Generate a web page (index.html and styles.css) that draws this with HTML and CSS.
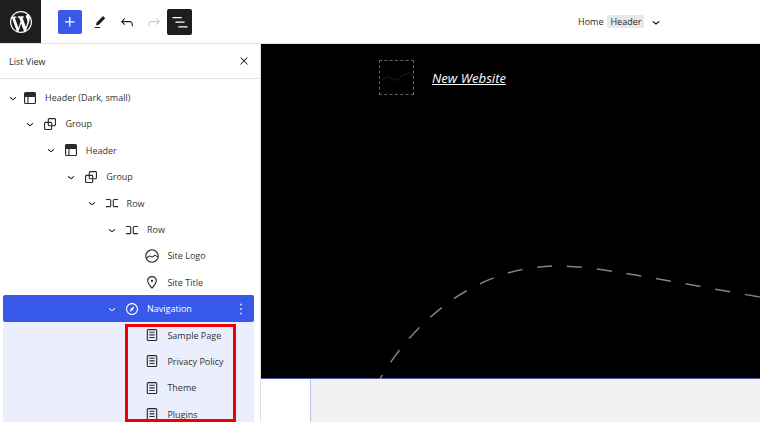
FILE: index.html
```html
<!DOCTYPE html>
<html lang="en">
<head>
  <meta charset="UTF-8">
  <title>List View</title>
  <link rel="stylesheet" href="styles.css">
</head>
<body>

  <!-- icon sprite -->
  <svg class="sprite" xmlns="http://www.w3.org/2000/svg">
    <symbol id="i-wp" viewBox="0 0 20 20"><path d="M20 10c0-5.51-4.49-10-10-10C4.48 0 0 4.49 0 10c0 5.52 4.48 10 10 10 5.51 0 10-4.48 10-10zM7.78 15.37L4.37 6.22c.55-.02 1.17-.08 1.17-.08.5-.06.44-1.13-.06-1.11 0 0-1.45.11-2.37.11-.18 0-.37 0-.58-.01C4.12 2.69 6.87 1.11 10 1.11c2.33 0 4.45.87 6.05 2.34-.68-.11-1.65.39-1.65 1.58 0 .74.45 1.36.9 2.1.35.61.55 1.36.55 2.46 0 1.49-1.4 5-1.4 5l-3.03-8.37c.54-.02.82-.17.82-.17.5-.05.44-1.25-.06-1.22 0 0-1.44.12-2.38.12-.87 0-2.33-.12-2.33-.12-.5-.03-.56 1.2-.06 1.22l.92.08 1.26 3.41zM17.41 10c.24-.64.74-1.87.43-4.25.7 1.29 1.05 2.71 1.05 4.25 0 3.29-1.73 6.24-4.4 7.78.97-2.59 1.94-5.2 2.92-7.78zM6.1 18.09C3.12 16.65 1.11 13.53 1.11 10c0-1.3.23-2.48.72-3.59C3.25 10.3 4.67 14.2 6.1 18.09zm4.03-6.63l2.58 6.98c-.86.29-1.76.45-2.71.45-.79 0-1.57-.11-2.29-.33.81-2.38 1.62-4.74 2.42-7.1z"/></symbol>
    <symbol id="i-plus" viewBox="0 0 24 24"><path d="M11 12.5V17.5H12.5V12.5H17.5V11H12.5V6H11V11H6V12.5H11Z"/></symbol>
    <symbol id="i-pencil" viewBox="0 0 24 24"><path d="m19 7-3-3-8.5 8.5-1 4 4-1L19 7Zm-7 11.5H5V20h7v-1.5Z"/></symbol>
    <symbol id="i-undo" viewBox="0 0 24 24"><path d="M18.3 11.7c-.6-.6-1.4-.9-2.3-.9H6.7l2.9-3.3-1.1-1-4.5 5L8.5 16l1-1-2.7-2.7H16c.5 0 .9.2 1.3.5 1 1 1 3.4 1 4.5v.3h1.5v-.2c0-1.5 0-4.3-1.5-5.7z"/></symbol>
    <symbol id="i-redo" viewBox="0 0 24 24"><path d="M15.6 6.5l-1.1 1 2.9 3.3H8c-.9 0-1.7.3-2.3.9-1.4 1.5-1.4 4.2-1.4 5.6v.2h1.5v-.3c0-1.1 0-3.5 1-4.5.3-.3.7-.5 1.3-.5h9.2L14.5 15l1.1 1.1 4.6-4.6-4.6-5z"/></symbol>
    <symbol id="i-list" viewBox="0 0 24 24"><path d="M3 6h11v1.5H3V6Zm3.5 5.5h11V13h-11v-1.5ZM21 17H10v1.5h11V17Z"/></symbol>
    <symbol id="i-close" viewBox="0 0 24 24"><path d="M13 11.8l6.1-6.3-1-1-6.1 6.2-6.1-6.2-1 1 6.1 6.3-6.5 6.7 1 1 6.5-6.6 6.5 6.6 1-1z"/></symbol>
    <symbol id="i-chevron" viewBox="0 0 24 24"><path d="M17.5 11.6L12 16l-5.5-4.4.9-1.2L12 14l4.5-3.6 1 1.2z"/></symbol>
    <symbol id="i-header" viewBox="0 0 24 24"><path d="M18.5 10.5H10v8h8a.5.5 0 00.5-.5v-7.5zm-10 0h-3V18a.5.5 0 00.5.5h2.5v-8zM6 4h12a2 2 0 012 2v12a2 2 0 01-2 2H6a2 2 0 01-2-2V6a2 2 0 012-2z"/></symbol>
    <symbol id="i-group" viewBox="0 0 24 24"><path d="M18 4h-7c-1.1 0-2 .9-2 2v3H6c-1.1 0-2 .9-2 2v7c0 1.1.9 2 2 2h7c1.1 0 2-.9 2-2v-3h3c1.1 0 2-.9 2-2V6c0-1.1-.9-2-2-2zm-4.5 14c0 .3-.2.5-.5.5H6c-.3 0-.5-.2-.5-.5v-7c0-.3.2-.5.5-.5h3V13c0 1.1.9 2 2 2h2.5v3zm0-4.5H11c-.3 0-.5-.2-.5-.5v-2.5H13c.3 0 .5.2.5.5v2.5zm5-.5c0 .3-.2.5-.5.5h-3V11c0-1.1-.9-2-2-2h-2.5V6c0-.3.2-.5.5-.5h7c.3 0 .5.2.5.5v7z"/></symbol>
    <symbol id="i-row" viewBox="0 0 24 24"><path d="M4 6.5h5a2 2 0 0 1 2 2v7a2 2 0 0 1-2 2H4V16h5a.5.5 0 0 0 .5-.5v-7A.5.5 0 0 0 9 8H4V6.5Zm16 0h-5a2 2 0 0 0-2 2v7a2 2 0 0 0 2 2h5V16h-5a.5.5 0 0 1-.5-.5v-7A.5.5 0 0 1 15 8h5V6.5Z"/></symbol>
    <symbol id="i-logo" viewBox="0 0 24 24"><path d="M12 3c-5 0-9 4-9 9s4 9 9 9 9-4 9-9-4-9-9-9zm0 1.5c4.1 0 7.5 3.4 7.5 7.5v.1c-1.4-.8-3.3-1.7-3.4-1.8-.2-.1-.5-.1-.8.1l-2.9 2.1L9 11.3c-.2-.1-.4 0-.6.1l-3.7 2.2c-.1-.5-.2-1-.2-1.5 0-4.1 3.4-7.5 7.5-7.5zm0 15c-3.1 0-5.7-1.9-6.9-4.5l3.7-2.2 3.5 1.2c.2.1.5 0 .7-.1l2.9-2.1c.8.4 2.5 1.2 3.5 1.9-.9 3.3-3.9 5.8-7.4 5.8z"/></symbol>
    <symbol id="i-marker" viewBox="0 0 24 24"><path d="M12 9c-.8 0-1.5.7-1.5 1.5S11.2 12 12 12s1.5-.7 1.5-1.5S12.8 9 12 9zm0-5c-3.6 0-6.5 2.8-6.5 6.2 0 .8.3 1.8.9 3.1.5 1.1 1.2 2.3 2 3.6.7 1 3 3.8 3.2 3.9l.4.5.4-.5c.2-.2 2.6-2.9 3.2-3.9.8-1.2 1.5-2.5 2-3.6.6-1.3.9-2.3.9-3.1C18.5 6.8 15.6 4 12 4zm4.3 8.7c-.5 1-1.1 2.2-1.9 3.4-.5.7-1.7 2.2-2.4 3-.7-.8-1.9-2.3-2.4-3-.8-1.2-1.4-2.3-1.9-3.3-.6-1.4-.7-2.2-.7-2.5 0-2.6 2.2-4.7 5-4.7s5 2.1 5 4.7c0 .2-.1 1-.7 2.4z"/></symbol>
    <symbol id="i-nav" viewBox="0 0 24 24"><path d="M12 4c-4.4 0-8 3.6-8 8s3.6 8 8 8 8-3.6 8-8-3.6-8-8-8zm0 14.5c-3.6 0-6.5-2.9-6.5-6.5S8.4 5.5 12 5.5s6.5 2.9 6.5 6.5-2.9 6.5-6.5 6.5zM9 16l4.5-3L15 8.4l-4.5 3L9 16z"/></symbol>
    <symbol id="i-page" viewBox="0 0 24 24"><path d="M15.5 7.5h-7V9h7V7.5Zm-7 3.5h7v1.5h-7V11Zm7 3.5h-7V16h7v-1.5Z"/><path d="M17 4H7a2 2 0 0 0-2 2v12a2 2 0 0 0 2 2h10a2 2 0 0 0 2-2V6a2 2 0 0 0-2-2ZM7 5.5h10a.5.5 0 0 1 .5.5v12a.5.5 0 0 1-.5.5H7a.5.5 0 0 1-.5-.5V6a.5.5 0 0 1 .5-.5Z"/></symbol>
    <symbol id="i-more" viewBox="0 0 24 24"><path d="M13 19h-2v-2h2v2zm0-6h-2v-2h2v2zm0-6h-2V5h2v2z"/></symbol>
  </svg>

  <!-- top bar -->
  <header class="topbar">
    <a class="site-btn"><svg class="wp-logo"><use href="#i-wp"/></svg></a>
    <div class="tools">
      <button class="tool add-btn"><svg><use href="#i-plus"/></svg></button>
      <button class="tool plain pencil"><svg><use href="#i-pencil"/></svg></button>
      <button class="tool plain"><svg><use href="#i-undo"/></svg></button>
      <button class="tool plain off"><svg><use href="#i-redo"/></svg></button>
      <button class="tool list-btn"><svg><use href="#i-list"/></svg></button>
    </div>
    <div class="doc-title">
      <span>Home</span>
      <span class="doc-current">Header</span>
      <svg><use href="#i-chevron"/></svg>
    </div>
  </header>

  <div class="main">
    <!-- list view -->
    <aside class="sidebar">
      <div class="side-head">
        <span>List View</span>
        <svg><use href="#i-close"/></svg>
      </div>
      <ul class="tree">
        <li class="row lv0"><svg class="toggle"><use href="#i-chevron"/></svg><svg class="ico"><use href="#i-header"/></svg>Header (Dark, small)</li>
        <li class="row lv1"><svg class="toggle"><use href="#i-chevron"/></svg><svg class="ico"><use href="#i-group"/></svg>Group</li>
        <li class="row lv2"><svg class="toggle"><use href="#i-chevron"/></svg><svg class="ico"><use href="#i-header"/></svg>Header</li>
        <li class="row lv3"><svg class="toggle"><use href="#i-chevron"/></svg><svg class="ico"><use href="#i-group"/></svg>Group</li>
        <li class="row lv4"><svg class="toggle"><use href="#i-chevron"/></svg><svg class="ico"><use href="#i-row"/></svg>Row</li>
        <li class="row lv5"><svg class="toggle"><use href="#i-chevron"/></svg><svg class="ico"><use href="#i-row"/></svg>Row</li>
        <li class="row lv6"><span class="toggle"></span><svg class="ico"><use href="#i-logo"/></svg>Site Logo</li>
        <li class="row lv6"><span class="toggle"></span><svg class="ico"><use href="#i-marker"/></svg>Site Title</li>
        <li class="row lv5 selected"><svg class="toggle"><use href="#i-chevron"/></svg><svg class="ico"><use href="#i-nav"/></svg>Navigation<svg class="more"><use href="#i-more"/></svg></li>
        <li class="row lv6 child"><span class="toggle"></span><svg class="ico"><use href="#i-page"/></svg>Sample Page</li>
        <li class="row lv6 child"><span class="toggle"></span><svg class="ico"><use href="#i-page"/></svg>Privacy Policy</li>
        <li class="row lv6 child"><span class="toggle"></span><svg class="ico"><use href="#i-page"/></svg>Theme</li>
        <li class="row lv6 child"><span class="toggle"></span><svg class="ico"><use href="#i-page"/></svg>Plugins</li>
      </ul>
      <div class="callout"></div>
    </aside>

    <!-- editor canvas -->
    <section class="stage">
      <div class="canvas">
        <div class="logo-slot">
          <svg viewBox="0 0 34 34"><path d="M2 20l6-4 8 4 6-4 8-4 3 3" fill="none" stroke="#3a3a3a" stroke-width="1" stroke-dasharray="2 1.5"/></svg>
        </div>
        <a class="site-name">New Website</a>
        <svg class="curve" viewBox="0 0 499 335">
          <path d="M119 335C145 290 205 222 297 222C335 222 400 236 499 253"/>
        </svg>
      </div>
      <div class="below">
        <div class="gutter"></div>
        <div class="backdrop"></div>
      </div>
    </section>
  </div>

</body>
</html>
```

FILE: styles.css
```css
* {
  box-sizing: border-box;
}

body {
  margin: 0;
  height: 100vh;
  overflow: hidden;
  background: white;
  color: #2a2a2a;
  font-family: 'Open Sans', 'Noto Sans', sans-serif;
  font-size: 9px;
  display: flex;
  flex-direction: column;
}

.sprite {
  display: none;
}

/* top bar */
.topbar {
  height: 44px;
  flex: none;
  display: flex;
  align-items: center;
  border-bottom: 1px solid #e0e0e0;
}

.site-btn {
  width: 41px;
  height: 43px;
  background: #1e1e1e;
  display: flex;
  align-items: center;
  justify-content: center;
}

.wp-logo {
  width: 22px;
  height: 22px;
  fill: white;
}

.tools {
  display: flex;
  align-items: center;
  margin-left: 17px;
}

.tool {
  border: none;
  padding: 0;
  background: none;
  display: flex;
  align-items: center;
  justify-content: center;
  fill: #1e1e1e;
}

.tool svg {
  width: 18px;
  height: 18px;
}

.add-btn {
  width: 24px;
  height: 24px;
  background: #3858e9;
  border-radius: 2px;
  fill: white;
}

.add-btn svg,
.list-btn svg,
.pencil svg {
  width: 20px;
  height: 20px;
}

.plain {
  width: 18px;
  height: 24px;
  margin-left: 8px;
}

.pencil {
  margin-left: 9px;
}

.plain + .plain {
  margin-left: 9px;
}

.off {
  fill: #ccc;
}

.list-btn {
  width: 25px;
  height: 26px;
  margin-left: 4px;
  background: #1e1e1e;
  border-radius: 2px;
  fill: white;
}

.doc-title {
  margin-left: 386px;
  display: flex;
  align-items: center;
  gap: 4px;
}

.doc-current {
  background: #e8e8e8;
  border-radius: 2px;
  padding: 0 3px;
}

.doc-title svg {
  width: 16px;
  height: 16px;
}

/* layout */
.main {
  flex: 1;
  min-height: 0;
  display: flex;
}

.sidebar {
  width: 261px;
  flex: none;
  position: relative;
  border-right: 1px solid #e0e0e0;
  overflow: hidden;
}

.side-head {
  height: 35px;
  padding: 0 10px 0 9px;
  display: flex;
  align-items: center;
  justify-content: space-between;
  border-bottom: 1px solid #e0e0e0;
}

.side-head svg {
  width: 12px;
  height: 12px;
}

/* tree */
.tree {
  list-style: none;
  margin: 0;
  padding: 5.4px 6px 0 3px;
}

.row {
  height: 26.4px;
  display: flex;
  align-items: center;
  color: #333;
}

.toggle {
  width: 14px;
  height: 14px;
  margin: 0 4px 0 -2px;
  flex: none;
}

.lv0 .toggle {
  margin: 0 1px;
}

.ico {
  width: 18px;
  height: 18px;
  flex: none;
  margin-right: 6px;
  fill: #2a2a2a;
}

.lv0 { padding-left: 2px; }
.lv1 { padding-left: 22.4px; }
.lv2 { padding-left: 42.8px; }
.lv3 { padding-left: 63.2px; }
.lv4 { padding-left: 83.6px; }
.lv5 { padding-left: 104px; }
.lv6 { padding-left: 124.4px; }

.selected {
  background: #3858e9;
  box-shadow: 0 -1px 0 #3858e9;
  color: white;
  fill: white;
  font-weight: 500;
  border-radius: 2px;
}

.selected .ico {
  fill: white;
}

.more {
  width: 18px;
  height: 18px;
  margin-left: auto;
  margin-right: 4px;
}

.child {
  background: #ebeefc;
}

.callout {
  position: absolute;
  left: 125px;
  top: 280px;
  width: 111px;
  height: 98px;
  border: 3px solid #f00000;
}

/* canvas */
.stage {
  flex: 1;
  display: flex;
  flex-direction: column;
  min-width: 0;
}

.canvas {
  height: 335px;
  flex: none;
  position: relative;
  background: black;
  border-bottom: 1px solid #4a5a9a;
  padding: 16px 0 0 118px;
  display: flex;
  align-items: flex-start;
  gap: 18px;
}

.logo-slot {
  width: 35px;
  height: 35px;
  border: 1px dashed #666;
}

.logo-slot svg {
  display: block;
  width: 100%;
  height: 100%;
}

.site-name {
  margin-top: 9px;
  color: white;
  font-size: 13.2px;
  font-style: italic;
  font-weight: 500;
  text-decoration: underline;
}

.curve {
  position: absolute;
  left: 0;
  top: 0;
  width: 499px;
  height: 335px;
  fill: none;
  stroke: #8c8070;
  stroke-width: 1.5;
  stroke-dasharray: 15 15;
  stroke-dashoffset: 10;
}

.below {
  flex: 1;
  display: flex;
}

.gutter {
  width: 50px;
  background: white;
  border-right: 1px solid #b9c4f4;
}

.backdrop {
  flex: 1;
  background: #f1f1f1;
}
```
